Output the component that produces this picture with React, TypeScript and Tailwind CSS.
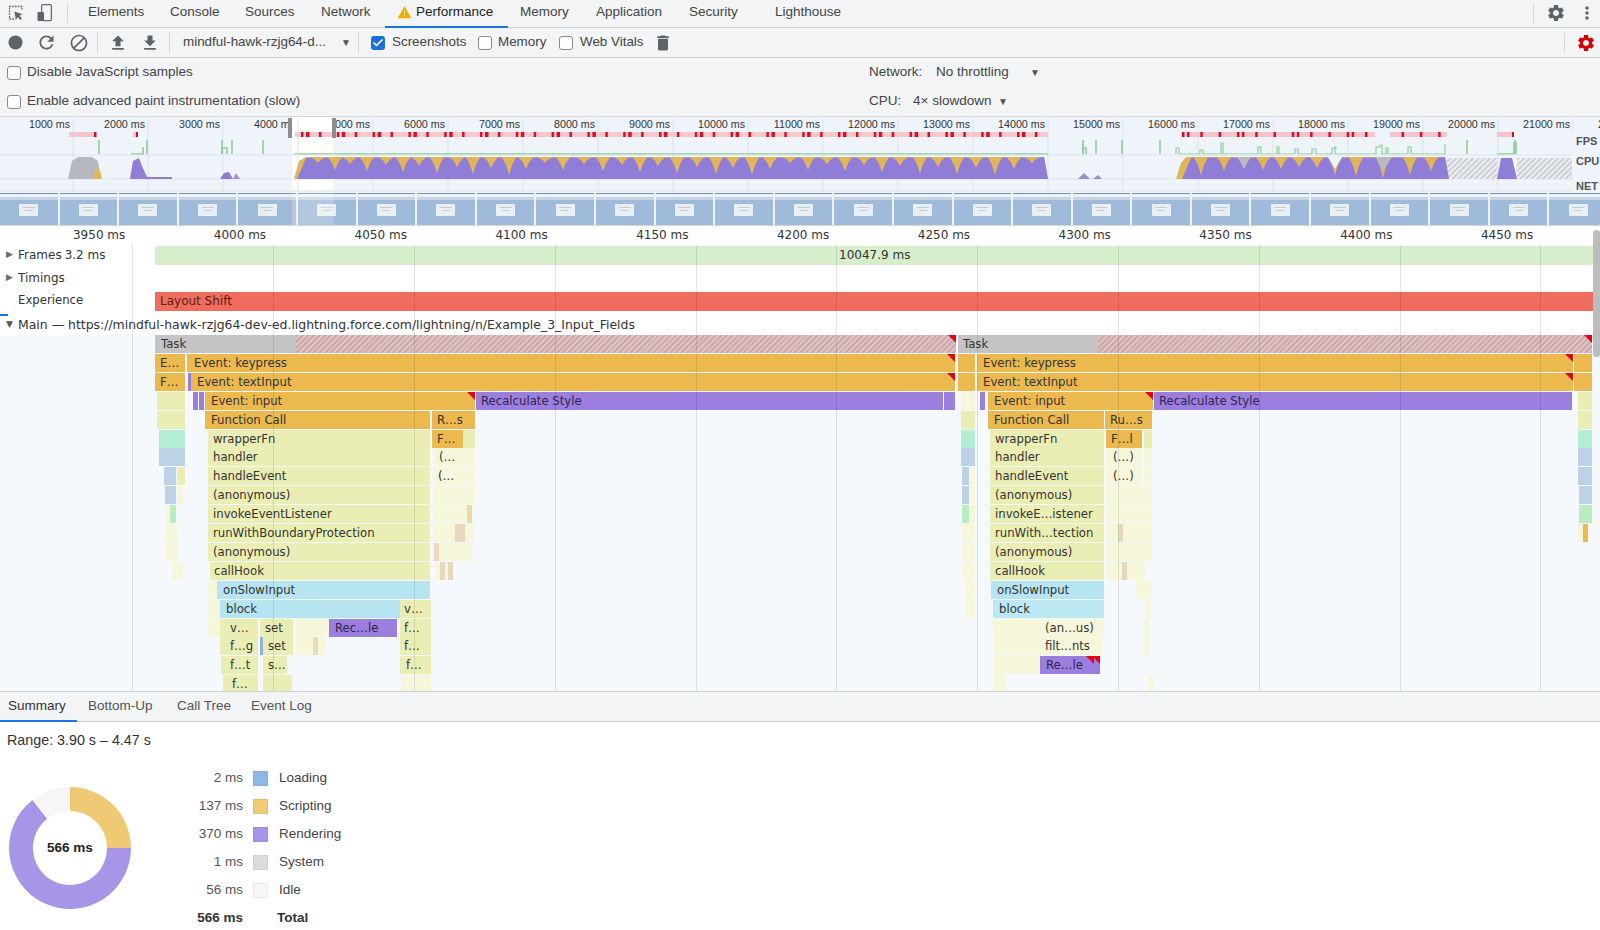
import { Check } from 'lucide-react';
import {
  MdBlock,
  MdDelete,
  MdFiberManualRecord,
  MdFileDownload,
  MdFileUpload,
  MdMoreVert,
  MdRefresh,
  MdSettings,
  MdWarning,
} from 'react-icons/md';

const O = 'bg-[#ecb94f]';
const P = 'bg-[#9b7fdf]';
const Y = 'bg-[#ebeeb4]';
const Y2 = 'bg-[#f5f6da]';
const M = 'bg-[#b2eed5]';
const B = 'bg-[#bcd2e6]';
const G = 'bg-[#b9ecc0]';
const C = 'bg-[#b6e5f1]';
const GR = 'bg-[#c4c4c4]';
const H = 'bg-[repeating-linear-gradient(135deg,#cfa8a8_0px,#cfa8a8_2px,#dcc4c4_2px,#dcc4c4_4px)]';

type Bar = { r: number; x: number; e: number; c: string; t?: string; o?: number; tri?: boolean };

const bar = (r: number, x: number, e: number, c: string, t?: string, o?: number, tri?: boolean): Bar => ({ r, x, e, c, t, o, tri });

const bars: Bar[] = [
  // first task
  bar(0, 155, 296, GR, 'Task', 6),
  bar(0, 296, 956, H, undefined, undefined, true),
  bar(1, 155, 185, O, 'E…'),
  bar(1, 187, 955, O, 'Event: keypress', 7, true),
  bar(2, 155, 185, O, 'F…'),
  bar(2, 188, 191, P),
  bar(2, 191, 955, O, 'Event: textInput', 6, true),
  bar(3, 157, 185, Y),
  bar(3, 193, 197, P),
  bar(3, 199, 204, P),
  bar(3, 205, 475, O, 'Event: input', 6, true),
  bar(3, 476, 943, P, 'Recalculate Style'),
  bar(3, 944, 955, P),
  bar(4, 157, 185, Y),
  bar(4, 205, 430, O, 'Function Call', 6),
  bar(4, 432, 475, O, 'R…s'),
  bar(5, 159, 185, M),
  bar(5, 208, 430, Y, 'wrapperFn'),
  bar(5, 432, 463, O, 'F…'),
  bar(5, 463, 475, Y),
  bar(6, 159, 185, B),
  bar(6, 208, 430, Y, 'handler'),
  bar(6, 434, 475, Y2, '(…'),
  bar(7, 164, 176, B),
  bar(7, 177, 185, Y),
  bar(7, 208, 430, Y, 'handleEvent'),
  bar(7, 433, 475, Y2, '(…'),
  bar(8, 165, 176, B),
  bar(8, 177, 184, Y2),
  bar(8, 208, 430, Y, '(anonymous)'),
  bar(8, 433, 475, Y2),
  bar(9, 169, 176, G),
  bar(9, 165, 169, Y2),
  bar(9, 208, 430, Y, 'invokeEventListener'),
  bar(9, 433, 472, Y2),
  bar(10, 165, 177, Y2),
  bar(10, 208, 430, Y, 'runWithBoundaryProtection'),
  bar(10, 433, 474, Y2),
  bar(11, 165, 177, Y2),
  bar(11, 208, 430, Y, '(anonymous)'),
  bar(11, 433, 472, Y2),
  bar(12, 172, 183, Y2),
  bar(12, 210, 430, Y, 'callHook', 4),
  bar(12, 436, 448, Y2),
  bar(13, 208, 217, Y2),
  bar(13, 217, 430, C, 'onSlowInput', 6),
  bar(14, 208, 220, Y2),
  bar(14, 220, 400, C, 'block', 6),
  bar(14, 400, 431, Y, 'v…', 4),
  bar(15, 208, 220, Y2),
  bar(15, 220, 258, Y, 'v…', 10),
  bar(15, 260, 293, Y, 'set', 5),
  bar(15, 296, 329, Y2),
  bar(15, 329, 397, P, 'Rec…le', 6),
  bar(15, 400, 431, Y, 'f…', 4),
  bar(16, 220, 258, Y, 'f…g', 10),
  bar(16, 260, 263, 'bg-[#8fb5e6]'),
  bar(16, 263, 293, Y, 'set', 5),
  bar(16, 296, 325, Y2),
  bar(16, 400, 431, Y, 'f…', 4),
  bar(17, 221, 258, Y, 'f…t', 9),
  bar(17, 263, 287, Y, 's…', 5),
  bar(17, 400, 431, Y, 'f…', 6),
  bar(18, 223, 258, Y, 'f…', 9),
  bar(18, 263, 292, Y),
  bar(18, 401, 431, Y2),
  // second task
  bar(0, 958, 1098, GR, 'Task'),
  bar(0, 1098, 1592, H, undefined, undefined, true),
  bar(1, 958, 975, O),
  bar(1, 977, 1573, O, 'Event: keypress', 6, true),
  bar(1, 1574, 1592, O),
  bar(2, 958, 975, O),
  bar(2, 977, 1573, O, 'Event: textInput', 6, true),
  bar(2, 1574, 1592, O),
  bar(3, 961, 975, Y2),
  bar(3, 980, 984, P),
  bar(3, 988, 1153, O, 'Event: input', 6, true),
  bar(3, 1154, 1572, P, 'Recalculate Style'),
  bar(3, 1578, 1592, Y),
  bar(4, 961, 975, Y),
  bar(4, 988, 1104, O, 'Function Call', 6),
  bar(4, 1105, 1152, O, 'Ru…s'),
  bar(4, 1578, 1592, Y),
  bar(5, 961, 975, M),
  bar(5, 990, 1104, Y, 'wrapperFn'),
  bar(5, 1106, 1142, O, 'F…l', 5),
  bar(5, 1144, 1152, Y),
  bar(5, 1578, 1592, M),
  bar(6, 961, 975, B),
  bar(6, 990, 1104, Y, 'handler'),
  bar(6, 1106, 1142, Y2, '(…)', 7),
  bar(6, 1144, 1152, Y2),
  bar(6, 1578, 1592, B),
  bar(7, 962, 969, B),
  bar(7, 969, 975, Y2),
  bar(7, 990, 1104, Y, 'handleEvent'),
  bar(7, 1106, 1142, Y2, '(…)', 7),
  bar(7, 1144, 1152, Y2),
  bar(7, 1578, 1592, B),
  bar(8, 962, 969, B),
  bar(8, 969, 975, Y2),
  bar(8, 990, 1104, Y, '(anonymous)'),
  bar(8, 1106, 1152, Y2),
  bar(8, 1579, 1592, B),
  bar(9, 962, 969, G),
  bar(9, 969, 975, Y2),
  bar(9, 990, 1104, Y, 'invokeE…istener'),
  bar(9, 1106, 1152, Y2),
  bar(9, 1579, 1592, G),
  bar(10, 962, 975, Y2),
  bar(10, 990, 1104, Y, 'runWith…tection'),
  bar(10, 1106, 1152, Y2),
  bar(10, 1581, 1588, O),
  bar(10, 1578, 1581, Y2),
  bar(11, 963, 975, Y2),
  bar(11, 990, 1104, Y, '(anonymous)'),
  bar(11, 1106, 1152, Y2),
  bar(12, 963, 975, Y2),
  bar(12, 990, 1104, Y, 'callHook'),
  bar(12, 1106, 1145, Y2),
  bar(13, 966, 975, Y2),
  bar(13, 991, 1104, C, 'onSlowInput', 6),
  bar(13, 1136, 1152, Y2),
  bar(14, 966, 975, Y2),
  bar(14, 993, 1104, 'bg-[#bce8f3]', 'block', 6),
  bar(14, 1145, 1152, Y2),
  bar(15, 993, 1104, Y2, '(an…us)', 52),
  bar(15, 1144, 1150, Y2),
  bar(16, 994, 1102, Y2, 'filt…nts', 51),
  bar(16, 1144, 1150, Y2),
  bar(17, 994, 1040, Y2),
  bar(17, 1040, 1094, P, 'Re…le', 6, true),
  bar(17, 1094, 1100, P, undefined, undefined, true),
  bar(18, 994, 1006, Y2),
  bar(18, 1148, 1152, Y2),
  // faint slices
  bar(10, 455, 457, 'bg-[#e6d8c0]'),
  bar(10, 460, 463, 'bg-[#e6d8c0]'),
  bar(9, 467, 469, 'bg-[#ecd9a8]'),
  bar(11, 434, 436, 'bg-[#ecd9c0]'),
  bar(12, 440, 442, 'bg-[#e6d8c0]'),
  bar(12, 448, 450, 'bg-[#e6d8c0]'),
  bar(16, 313, 316, 'bg-[#e8dcc0]'),
  bar(10, 1118, 1122, 'bg-[#e6d8c0]'),
  bar(12, 1122, 1125, 'bg-[#e6d8c0]'),
];

const overviewLabels = Array.from({ length: 22 }, (_, i) => `${(i + 1) * 1000} ms`);
const rulerLabels = [3950, 4000, 4050, 4100, 4150, 4200, 4250, 4300, 4350, 4400, 4450];
const gridX = rulerLabels.map((_, i) => 132.3 + i * 140.8);

const mainTabs = [
  { name: 'Elements', w: 'w-[82px]' },
  { name: 'Console', w: 'w-[75px]' },
  { name: 'Sources', w: 'w-[76px]' },
  { name: 'Network', w: 'w-[76px]' },
];
const moreTabs = [
  { name: 'Memory', w: 'w-[76px]' },
  { name: 'Application', w: 'w-[93px]' },
  { name: 'Security', w: 'w-[86px]' },
  { name: 'Lighthouse', w: 'w-[80px]' },
];

const legend = [
  { v: '2 ms', c: 'bg-[#8fb8e8]', l: 'Loading' },
  { v: '137 ms', c: 'bg-[#f0cb75]', l: 'Scripting' },
  { v: '370 ms', c: 'bg-[#a895e8]', l: 'Rendering' },
  { v: '1 ms', c: 'bg-[#dcdcdc]', l: 'System' },
  { v: '56 ms', c: 'bg-[#f6f6f6]', l: 'Idle' },
];

function Box({ checked, className = '' }: { checked?: boolean; className?: string }) {
  if (checked) {
    return (
      <span className={`flex h-[14px] w-[14px] shrink-0 items-center justify-center rounded-[3px] bg-[#1a6fd8] ${className}`}>
        <Check className="h-[12px] w-[12px] text-white" strokeWidth={3.5} />
      </span>
    );
  }
  return <span className={`block h-[14px] w-[14px] shrink-0 rounded-[3px] border border-[#8a8a8a] bg-white ${className}`} />;
}

function Sep({ className = '' }: { className?: string }) {
  return <span className={`block h-[20px] w-px shrink-0 bg-[#d5d7d9] ${className}`} />;
}

function InspectIcon() {
  return (
    <svg width="18" height="18" viewBox="0 0 18 18" fill="none">
      <path d="M7 15H2.5V2.5H15V6.5" stroke="#6e6e6e" strokeWidth="1.3" strokeDasharray="1.8 1" />
      <path d="M7.5 7.5L8.8 16L10.8 13L13.3 16L15 14.6L12.4 11.7L15.5 10.2Z" fill="#5f6368" />
    </svg>
  );
}

function DeviceIcon() {
  return (
    <svg width="18" height="20" viewBox="0 0 18 20" fill="none">
      <rect x="5.6" y="1.6" width="9.8" height="16" rx="1" stroke="#6e6e6e" strokeWidth="1.3" />
      <rect x="1.5" y="9" width="6.5" height="9" rx="0.8" fill="#5f6368" />
    </svg>
  );
}

function purpleShape(start: number, end: number, notches: [number, number][]) {
  const pts: string[] = [`${start},178`, `${start + 9},157`];
  notches.forEach(([x, d]) => {
    pts.push(`${x - 7},156.5`, `${x - 3},${156 + d * 0.45}`, `${x},${156 + d}`, `${x + 3},${156 + d * 0.45}`, `${x + 7},156.5`);
  });
  pts.push(`${end - 4},156`, `${end},178`);
  return pts.join(' ');
}

const notchesA: [number, number][] = [
  318, 335, 350, 367, 386, 403, 419, 437, 457, 473, 491, 509, 526, 545, 563, 584, 603, 622, 640, 658, 677, 697, 716,
  733, 752, 770, 790, 808, 827, 845, 864, 882, 900, 920, 938, 957, 976, 995, 1014, 1032,
].map((x, i) => [x, 6 + ((i * 7) % 13)] as [number, number]);
const notchesB: [number, number][] = [
  [1201, 18],
  [1224, 14],
  [1244, 12],
  [1263, 13],
  [1281, 12],
  [1299, 10],
  [1317, 11],
  [1335, 18],
  [1356, 19],
  [1383, 21],
  [1410, 18],
  [1431, 14],
];

const redTicks: [number, number][] = [
  [94, 96.5],
  [136, 138],
];
for (let i = 0; i < 42; i++) {
  const x = 301 + i * 17.9;
  redTicks.push([x, x + 2.5]);
  if (i % 2 === 0) redTicks.push([x + 5, x + 8.5]);
}
for (let i = 0; i < 15; i++) {
  const x = 1182 + i * 18.3;
  if (x < 1372 || x > 1392) redTicks.push([x, x + 2.5]);
  if (i % 3 === 0 && x < 1372) redTicks.push([x + 5, x + 7.5]);
}
redTicks.push([1512, 1514]);

function OverviewChart() {
  const spikes = [99, 147, 222, 232, 263, 1083, 1096, 1122, 1160, 1467, 1515];
  const grid = Array.from({ length: 21 }, (_, i) => 73 + i * 75);
  return (
    <svg className="absolute inset-0" width="1600" height="109" viewBox="0 116 1600 109">
      <defs>
        <pattern id="cpuHatch" width="4" height="4" patternUnits="userSpaceOnUse" patternTransform="rotate(45)">
          <rect width="4" height="4" fill="#eceef1" />
          <rect width="1.6" height="4" fill="#c5c8cc" />
        </pattern>
      </defs>
      {grid.map((x) => (
        <path key={x} d={`M${x} 117V190`} stroke="#dbe2ec" strokeWidth="1" />
      ))}
      {/* fps ticks */}
      <rect x="69" y="131" width="27" height="5" fill="#f3c4cc" />
      <rect x="133" y="131" width="5" height="5" fill="#f3c4cc" />
      <rect x="295" y="131" width="753" height="5" fill="#f7c9cf" />
      <rect x="1181" y="131" width="194" height="5" fill="#f3c4cc" />
      <rect x="1390" y="131" width="57" height="5" fill="#f3c4cc" />
      <rect x="1497" y="131" width="17" height="5" fill="#f3c4cc" />
      {redTicks.map(([a, b], i) => (
        <rect key={i} x={a} y="131" width={b - a} height="5" fill="#dc0f1e" />
      ))}
      <g stroke="#8ccf97" strokeWidth="1.6" fill="none">
        {spikes.map((x) => (
          <path key={x} d={`M${x} 139V153`} />
        ))}
        <path d="M131 153H143V147H144" />
        <path d="M222 153V147H227V153" />
        <path d="M1083 153V147H1086V153" />
        <path d="M294 153H1048" />
        <path
          strokeWidth="1.2"
          d="M1176 153V147H1179V153H1200V149H1203V153H1221V142H1223V153H1258V146H1261V153H1277V146H1279V153H1295V148H1298V153H1312V148H1316V153H1332V147H1336V146H1335V153H1376V146H1380V144H1382V153H1386V147H1388V153H1408V146H1411V153H1445V143"
        />
        <path d="M1497 153H1514V142H1516V153" />
      </g>
      {/* cpu */}
      <path d="M0 178H1572M0 190H1572M0 154H1572" stroke="#dde3ec" strokeWidth="1" />
      <polygon points="68,178 72,160 78,156 92,156 98,160 101,178" fill="#b5b8be" />
      <polygon points="93,178 96,165 101,172 102,178" fill="#e4b857" />
      <polygon points="130,178 133,160 139,157 142,165 147,176 172,176 172,178" fill="#8f7dd8" />
      <polygon points="220,178 224,172 229,171 233,178" fill="#8f7dd8" />
      <polygon points="233,178 236,172 240,178" fill="#a08fd8" />
      <polygon points="1078,178 1084,172 1090,178" fill="#9a8fc8" />
      <polygon points="1093,178 1098,174 1102,178" fill="#9a8fc8" />
      <rect x="1444" y="157" width="53" height="21" fill="url(#cpuHatch)" />
      <rect x="1517" y="157" width="55" height="21" fill="url(#cpuHatch)" />
      <polygon points="294,178 299,160 306,156 1044,156 1048,178" fill="#e2b658" />
      <polygon points={purpleShape(297, 1048, notchesA)} fill="#8f7dd8" />
      <polygon points="1176,178 1181,162 1186,156 1445,156 1449,178" fill="#e2b658" />
      <polygon points={purpleShape(1182, 1449, notchesB)} fill="#8f7dd8" />
      <polygon points="1238,156 1250,156 1244,168" fill="#b8bac0" />
      <polygon points="1376,156 1392,156 1383,170" fill="#b8bac0" />
      <polygon points="1328,156 1342,156 1335,168" fill="#f0f2f6" />
      <polygon points="1497,178 1501,157 1512,157 1517,178" fill="#8f7dd8" />
    </svg>
  );
}

function Thumb() {
  return (
    <div className="h-[32px] w-[57.6px] shrink-0 bg-[#a0bada]">
      <div className="h-[1px] bg-[#6f90b5]" />
      <div className="h-[3px] bg-[#eef2f7]" />
      <div className="h-[3px] bg-[#c8d5e5]" />
      <div className="mx-auto mt-[4px] flex h-[12px] w-[19px] flex-col items-center gap-[2px] bg-[#e9eff7] pt-[3px]">
        <div className="h-px w-[12px] bg-[#c3c9d4]" />
        <div className="h-px w-[8px] bg-[#d8c9a8]" />
      </div>
    </div>
  );
}

function Overview() {
  return (
    <div className="relative h-[109px] shrink-0 overflow-hidden border-t border-[#d5d7d9] bg-[#eff4fb]">
      <div className="flex h-[16px] text-[10.7px] leading-[15px] text-[#333]">
        {overviewLabels.map((l, i) => (
          <span key={l} className={`shrink-0 pr-[3px] text-right whitespace-nowrap ${i === 0 ? 'w-[73px]' : 'w-[75px]'}`}>
            {l}
          </span>
        ))}
      </div>
      <div className="absolute top-0 left-[292px] h-[74px] w-[41px] bg-white" />
      <OverviewChart />
      <div className="absolute top-[1px] left-[288px] h-[20px] w-[4px] bg-[#8d8d8d]" />
      <div className="absolute top-[1px] left-[332px] h-[20px] w-[4px] bg-[#8d8d8d]" />
      <div className="absolute top-[15px] right-0 flex h-[66px] w-[28px] flex-col bg-[#eff4fb] pl-[4px] text-[11px] font-bold text-[#555]">
        <span className="leading-[18px]">FPS</span>
        <span className="mt-[2px] leading-[18px]">CPU</span>
        <span className="mt-[7px] leading-[18px]">NET</span>
      </div>
      <div className="absolute right-0 bottom-0 left-0 flex gap-[2px]">
        {Array.from({ length: 27 }, (_, i) => (
          <Thumb key={i} />
        ))}
      </div>
      <div className="absolute bottom-0 left-[292px] h-[32px] w-[42px] bg-[#ffffff]/20" />
    </div>
  );
}

function FlameBar({ b }: { b: Bar }) {
  const isPurple = b.c === P;
  return (
    <div
      className={`absolute h-[18px] overflow-hidden text-[11.7px] whitespace-nowrap leading-[18px] ${b.c} ${isPurple ? 'text-[#2f2450]' : 'text-[#333]'}`}
      style={{ top: b.r * 18.9, left: b.x, width: b.e - b.x, paddingLeft: b.o ?? 5 }}
    >
      {b.t}
      {b.tri && (
        <span className="absolute top-0 right-0 h-0 w-0 border-t-[8px] border-l-[8px] border-t-[#e60012] border-l-transparent" />
      )}
    </div>
  );
}

function Timeline() {
  return (
    <div className="relative h-[466px] shrink-0 overflow-hidden bg-white font-['DejaVu_Sans',sans-serif] text-[12px] text-[#333]">
      <div className="flex h-[20px] border-t border-[#d8d8d8] leading-[19px]">
        {rulerLabels.map((l, i) => (
          <span key={l} className={`shrink-0 pr-[7px] text-right ${i === 0 ? 'w-[132.3px]' : 'w-[140.8px]'}`}>
            {l} ms
          </span>
        ))}
      </div>
      <div className="flex h-[20px] items-center">
        <span className="ml-[6px] w-[12px] text-[9px] text-[#6b6b6b]">▶</span>
        <span className="w-[137px] whitespace-nowrap">
          Frames<span className="ml-[3px]">3.2 ms</span>
        </span>
        <div className="flex h-[19px] flex-1 items-center bg-[#d6eecb] pr-[8px]">
          <span className="ml-[684px]">10047.9 ms</span>
        </div>
      </div>
      <div className="flex h-[26px] items-center">
        <span className="ml-[6px] w-[12px] text-[9px] text-[#6b6b6b]">▶</span>
        <span>Timings</span>
      </div>
      <div className="flex h-[23px] items-center pb-[3px]">
        <span className="ml-[18px] w-[137px] text-[11.7px]">Experience</span>
        <div className="h-[19px] flex-1 bg-[#f06c5e] pl-[5px] leading-[19px] text-[#5a1f18]">Layout Shift</div>
      </div>
      <div className="flex h-[21px] items-center pt-[1px] text-[12.45px]">
        <span className="ml-[6px] w-[12px] text-[9px] text-[#555]">▼</span>
        <span className="whitespace-nowrap">
          Main — https://mindful-hawk-rzjg64-dev-ed.lightning.force.com/lightning/n/Example_3_Input_Fields
        </span>
      </div>
      <div className="relative h-[356px] bg-[#f5f8fd]">
        {bars.map((b, i) => (
          <FlameBar key={i} b={b} />
        ))}
      </div>
      {gridX.map((x) => (
        <div key={x} className="absolute top-[20px] bottom-0 w-px bg-[#000000]/10" style={{ left: x }} />
      ))}
      <div className="absolute top-[89px] left-0 h-[2px] w-[8px] bg-[#1a73e8]" />
      <div className="absolute top-[5px] right-0 h-[127px] w-[7px] rounded-[3px] bg-[#bdbdbd]" />
    </div>
  );
}

function Donut() {
  const cx = 61;
  const cy = 61;
  const R = 61;
  const r = 37;
  const seg = (a0: number, a1: number) => {
    const pt = (rad: number, a: number) => {
      const t = ((a - 90) * Math.PI) / 180;
      return `${cx + rad * Math.cos(t)} ${cy + rad * Math.sin(t)}`;
    };
    const large = a1 - a0 > 180 ? 1 : 0;
    return `M${pt(R, a0)}A${R} ${R} 0 ${large} 1 ${pt(R, a1)}L${pt(r, a1)}A${r} ${r} 0 ${large} 0 ${pt(r, a0)}Z`;
  };
  return (
    <svg width="122" height="122" viewBox="0 0 122 122" className="shrink-0">
      <path d={seg(0, 90)} fill="#efc973" />
      <path d={seg(90, 322)} fill="#a895e8" />
      <path d={seg(322, 360)} fill="#f6f6f6" />
    </svg>
  );
}

export default function App() {
  return (
    <div className="flex h-[930px] w-[1600px] flex-col overflow-hidden bg-white font-['Liberation_Sans',Arial,sans-serif] text-[13.5px] text-[#333]">
      <div className="flex h-[28px] shrink-0 items-center border-b border-[#cdd0d2] bg-[#f2f4f5] pb-[2px] text-[#444]">
        <span className="ml-[7px] flex w-[29px]">
          <InspectIcon />
        </span>
        <span className="flex w-[31px]">
          <DeviceIcon />
        </span>
        <Sep />
        <div className="ml-[20px] flex h-full items-center">
          {mainTabs.map((t) => (
            <span key={t.name} className={`${t.w} shrink-0`}>
              {t.name}
            </span>
          ))}
          <span className="relative mr-[12px] -ml-[12px] flex h-[28px] w-[123px] shrink-0 items-center gap-[4px] pb-[1px] pl-[12px] text-[#222]">
            <MdWarning className="h-[15px] w-[15px] text-[#f0ab00]" />
            Performance
            <span className="absolute right-0 bottom-[-1px] left-0 h-[2px] bg-[#1a73e8]" />
          </span>
          {moreTabs.map((t) => (
            <span key={t.name} className={`${t.w} shrink-0`}>
              {t.name}
            </span>
          ))}
        </div>
        <div className="ml-auto flex items-center">
          <Sep />
          <MdSettings className="ml-[12px] h-[20px] w-[20px] text-[#5f6368]" />
          <MdMoreVert className="ml-[11px] mr-[3px] h-[20px] w-[20px] text-[#5f6368]" />
        </div>
      </div>

      <div className="flex h-[30px] shrink-0 items-center border-b border-[#cdd0d2] bg-[#f2f4f5] text-[13.4px] text-[#444]">
        <MdFiberManualRecord className="ml-[5px] h-[21px] w-[21px] text-[#5f6368]" />
        <MdRefresh className="ml-[10px] h-[21px] w-[21px] text-[#5f6368]" />
        <MdBlock className="ml-[12px] h-[20px] w-[20px] text-[#5f6368]" />
        <Sep className="ml-[8px]" />
        <MdFileUpload className="ml-[10px] h-[20px] w-[20px] text-[#5f6368]" />
        <MdFileDownload className="ml-[12px] h-[20px] w-[20px] text-[#5f6368]" />
        <Sep className="ml-[9px]" />
        <span className="ml-[13px] w-[158px] whitespace-nowrap">mindful-hawk-rzjg64-d...</span>
        <span className="w-[17px] text-[10px] text-[#555]">▼</span>
        <Sep />
        <Box checked className="ml-[12px]" />
        <span className="ml-[7px] w-[86px]">Screenshots</span>
        <Box />
        <span className="ml-[6px] w-[61px]">Memory</span>
        <Box />
        <span className="ml-[7px] w-[76px]">Web Vitals</span>
        <MdDelete className="-ml-[3px] h-[20px] w-[20px] text-[#5f6368]" />
        <div className="ml-auto flex items-center">
          <Sep />
          <MdSettings className="ml-[11px] mr-[4px] h-[20px] w-[20px] text-[#d60000]" />
        </div>
      </div>

      <div className="flex h-[58px] shrink-0 flex-col bg-[#f2f4f5] text-[#444]">
        <div className="flex h-[29px] items-center">
          <Box className="ml-[7px]" />
          <span className="ml-[6px] w-[842px]">Disable JavaScript samples</span>
          <span className="w-[67px]">Network:</span>
          <span className="w-[94px]">No throttling</span>
          <span className="text-[10px] text-[#555]">▼</span>
        </div>
        <div className="flex h-[29px] items-center">
          <Box className="ml-[7px]" />
          <span className="ml-[6px] w-[842px]">Enable advanced paint instrumentation (slow)</span>
          <span className="w-[44px]">CPU:</span>
          <span className="w-[85px]">4× slowdown</span>
          <span className="text-[10px] text-[#555]">▼</span>
        </div>
      </div>

      <Overview />
      <Timeline />

      <div className="flex h-[31px] shrink-0 items-center border-y border-[#cdd0d2] bg-[#f2f4f5] text-[#555]">
        <span className="relative flex h-full w-[77px] items-center pl-[8px] text-[#333]">
          Summary
          <span className="absolute right-0 bottom-[-1px] left-0 h-[2px] bg-[#1a73e8]" />
        </span>
        <span className="ml-[11px] w-[89px]">Bottom-Up</span>
        <span className="w-[74px]">Call Tree</span>
        <span>Event Log</span>
      </div>

      <div className="min-h-0 flex-1">
        <div className="mt-[9px] ml-[7px] text-[14.3px] leading-[18px]">Range: 3.90 s – 4.47 s</div>
        <div className="mt-[15px] flex">
          <div className="mt-[23px] ml-[9px]">
            <div className="relative h-[122px] w-[122px]">
              <Donut />
              <span className="absolute inset-0 flex items-center justify-center font-bold text-[#222]">566 ms</span>
            </div>
          </div>
          <div className="ml-[35px] flex flex-col">
            {legend.map((row) => (
              <div key={row.l} className="flex h-[28px] items-center">
                <span className="w-[77px] text-right text-[#555]">{row.v}</span>
                <span className={`ml-[10px] h-[15px] w-[15px] border border-black/5 ${row.c}`} />
                <span className="ml-[11px] text-[#444]">{row.l}</span>
              </div>
            ))}
            <div className="flex h-[28px] items-center font-bold">
              <span className="w-[77px] text-right">566 ms</span>
              <span className="ml-[34px]">Total</span>
            </div>
          </div>
        </div>
      </div>
    </div>
  );
}
